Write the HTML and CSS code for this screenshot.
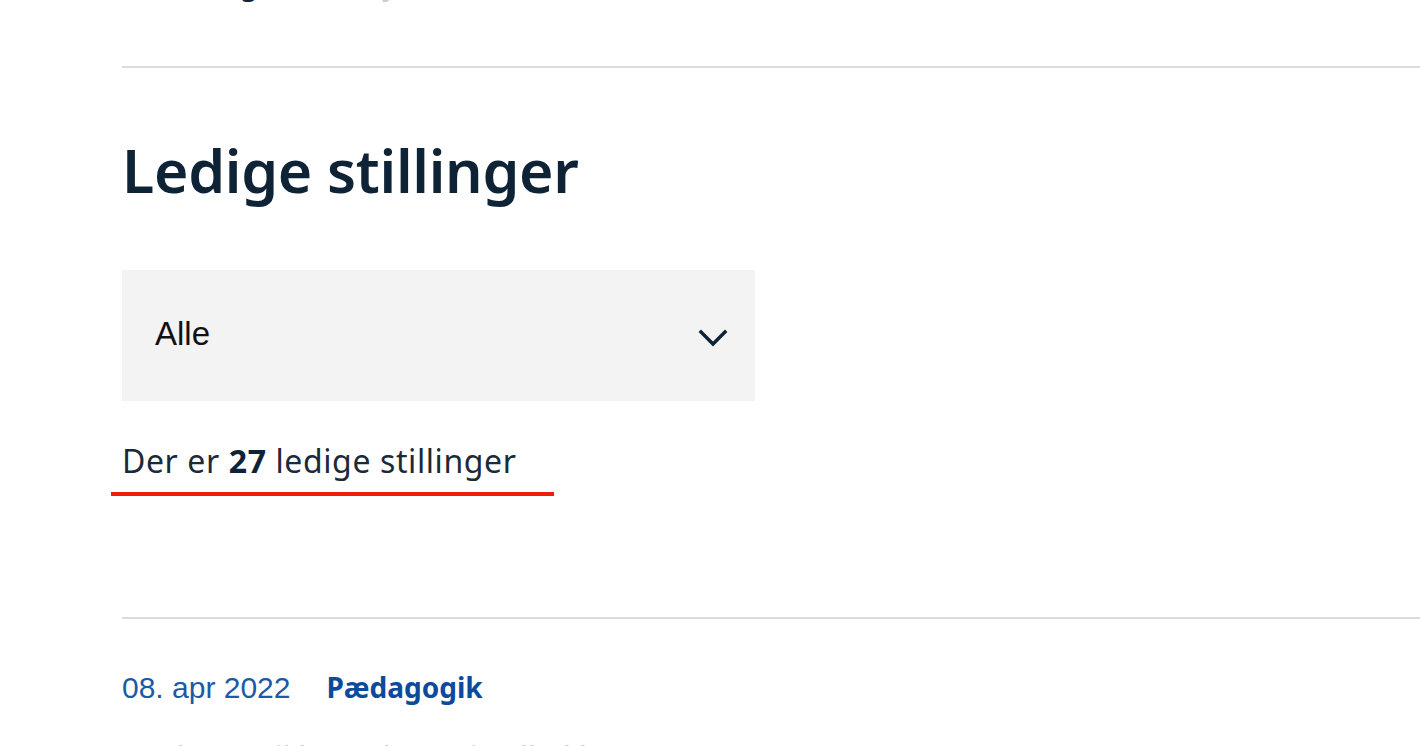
FILE: index.html
```html
<!DOCTYPE html>
<html lang="da">
<head>
<meta charset="utf-8">
<title>Ledige stillinger</title>
<link rel="stylesheet" href="styles.css">
</head>
<body>
<main class="page">
  <p class="prev-text">Læs om <span class="dark">g</span>ode arbejdsvilkår i kommunen</p>
  <hr class="rule">
  <h1 class="title">Ledige stillinger</h1>
  <div class="select">
    <span class="select-value">Alle</span>
    <svg class="chevron" width="30" height="20" viewBox="0 0 30 20" aria-hidden="true">
      <path d="M3 4 L15 16 L27 4" fill="none" stroke="#0d2236" stroke-width="3.4" stroke-linecap="square"/>
    </svg>
  </div>
  <p class="count">Der er <strong>27</strong> ledige stillinger</p>
  <div class="underline"></div>
  <hr class="rule rule-lower">
  <div class="meta">
    <span class="date">08. apr 2022</span>
    <span class="category">Pædagogik</span>
  </div>
  <p class="next-title">Pædagog til børnehuset i Solbakken</p>
</main>
</body>
</html>
```
FILE: styles.css
```css
html, body {
  margin: 0;
  padding: 0;
  background: #ffffff;
  overflow: hidden;
}
body {
  font-family: "Noto Sans", "Liberation Sans", sans-serif;
  color: #0e2336;
}
.page {
  padding-left: 122px;
  height: 746px;
  overflow: hidden;
}
.prev-text {
  margin: -34px 0 0 0;
  font-size: 30px;
  line-height: 36px;
  color: #c8ccd0;
  white-space: nowrap;
}
.prev-text .dark {
  color: #0e2336;
}
.rule {
  margin: 64px 0 0 0;
  border: 0;
  height: 2px;
  background: #dcdcdc;
}
.title {
  margin: 62px 0 0 0;
  font-size: 59px;
  line-height: 80px;
  font-weight: 600;
  letter-spacing: -0.3px;
  color: #0e2336;
}
.select {
  margin-top: 60px;
  width: 633px;
  height: 131px;
  background: #f3f3f3;
  display: flex;
  align-items: center;
  justify-content: space-between;
  padding: 0 27px 0 33px;
  box-sizing: border-box;
}
.select-value {
  font-family: "Liberation Sans", Arial, sans-serif;
  font-size: 33px;
  color: #111111;
  margin-top: -4px;
}
.chevron {
  display: block;
  margin-top: 4px;
}
.count {
  margin: 39px 0 0 0;
  font-size: 32px;
  line-height: 42px;
  letter-spacing: 0.6px;
  color: #1b2a38;
}
.count strong {
  font-weight: 700;
  color: #0e2336;
}
.underline {
  margin: 10px 0 0 -11px;
  width: 443px;
  height: 4px;
  background: #f21b0c;
}
.rule-lower {
  margin-top: 121px;
}
.meta {
  margin-top: 50px;
  display: flex;
  gap: 36px;
  align-items: baseline;
  font-size: 30px;
  line-height: 36px;
}
.date {
  font-family: "Liberation Sans", Arial, sans-serif;
  color: #1d5aa6;
}
.category {
  font-weight: 700;
  color: #0b4a9c;
  font-size: 28px;
}
.next-title {
  margin: 30px 0 0 0;
  font-size: 30px;
  color: #c8ccd0;
  white-space: nowrap;
}
```
